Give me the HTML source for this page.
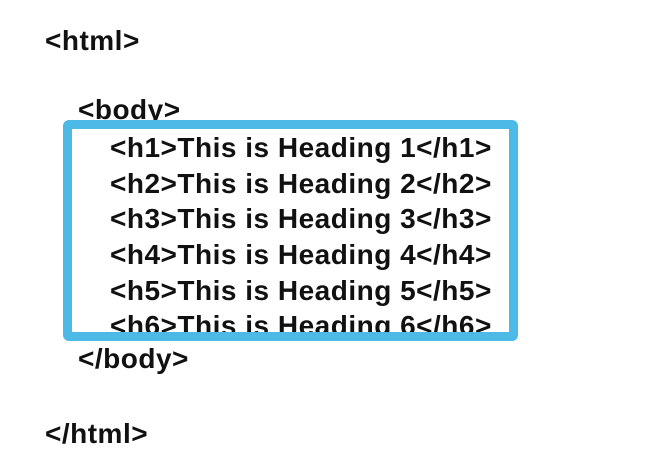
<!DOCTYPE html>
<html><head><style>
body{margin:0;width:665px;height:461px;background:#fff;position:relative;overflow:hidden;font-family:"Liberation Sans",sans-serif;font-weight:bold;font-size:28px;letter-spacing:0.5px;color:#111}
.t{position:absolute;line-height:28px;white-space:pre}
.box{position:absolute;left:63px;top:120px;width:437px;height:203px;border:9px solid #4db9e7;border-radius:6px;z-index:2}
</style></head><body>
<div class="t" style="left:45px;top:27px">&lt;html&gt;</div>
<div class="t" style="left:78px;top:96px">&lt;body&gt;</div>
<div class="t" style="left:110px;top:134px">&lt;h1&gt;This is Heading 1&lt;/h1&gt;</div>
<div class="t" style="left:110px;top:170px">&lt;h2&gt;This is Heading 2&lt;/h2&gt;</div>
<div class="t" style="left:110px;top:205px">&lt;h3&gt;This is Heading 3&lt;/h3&gt;</div>
<div class="t" style="left:110px;top:241px">&lt;h4&gt;This is Heading 4&lt;/h4&gt;</div>
<div class="t" style="left:110px;top:277px">&lt;h5&gt;This is Heading 5&lt;/h5&gt;</div>
<div class="t" style="left:110px;top:312px">&lt;h6&gt;This is Heading 6&lt;/h6&gt;</div>
<div class="box"></div>
<div class="t" style="left:78px;top:345px">&lt;/body&gt;</div>
<div class="t" style="left:45px;top:420px">&lt;/html&gt;</div>
</body></html>
